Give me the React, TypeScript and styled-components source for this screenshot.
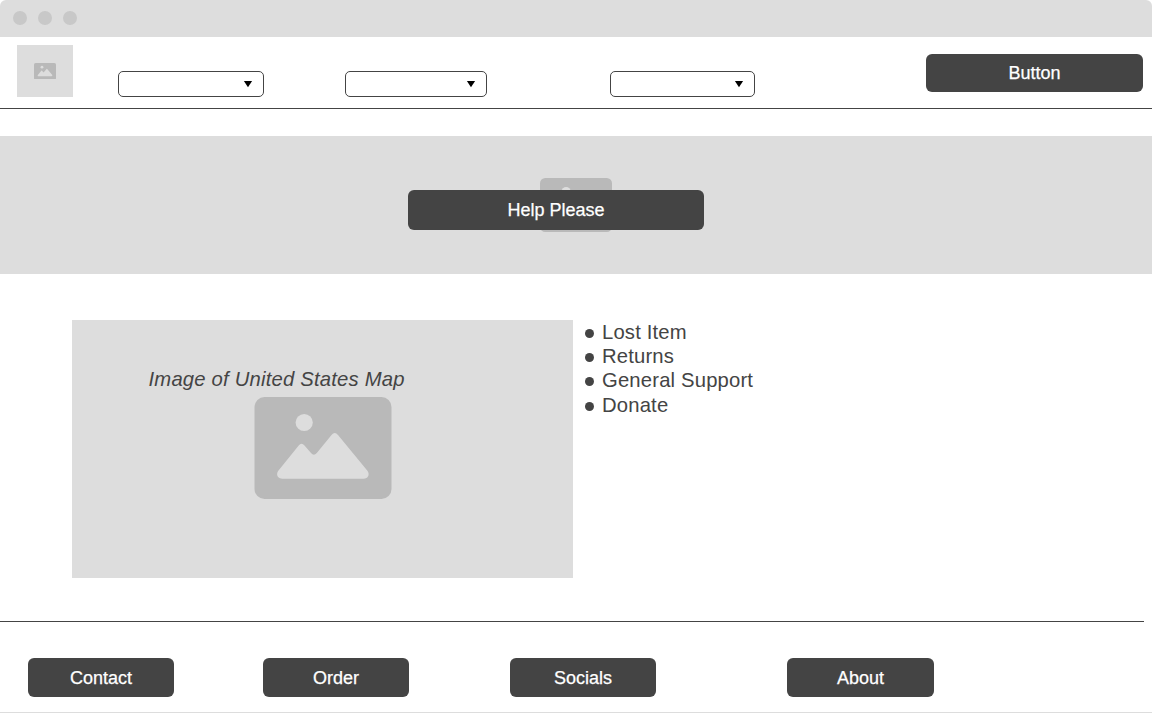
import React from "react";
import styled, { createGlobalStyle } from "styled-components";

const GlobalStyle = createGlobalStyle`
  * { box-sizing: border-box; }
  body { margin: 0; background: #fff; font-family: "Liberation Sans", Arial, sans-serif; color: #444; }
`;

const Page = styled.div`
  width: 1152px;
  height: 713px;
  display: flex;
  flex-direction: column;
  overflow: hidden;
  border-bottom: 1px solid #ddd;
`;

const TitleBar = styled.div`
  height: 37px;
  flex: none;
  display: flex;
  gap: 10.75px;
  padding: 11px 13px;
  background: #ddd;
  border-radius: 6px 6px 0 0;
`;

const WindowDot = styled.span`
  width: 14px;
  height: 14px;
  border-radius: 50%;
  background: #c8c8c8;
`;

const Header = styled.header`
  height: 72px;
  flex: none;
  display: flex;
  align-items: flex-start;
  padding: 8px 9px 0 17px;
  border-bottom: 1px solid #444;
`;

const Placeholder = styled.div<{ $w: number; $h: number; $lift?: number }>`
  width: ${(p) => p.$w}px;
  height: ${(p) => p.$h}px;
  flex: none;
  display: flex;
  align-items: center;
  justify-content: center;
  padding-bottom: ${(p) => p.$lift ?? 0}px;
  position: relative;
  background: #ddd;
`;

const Select = styled.button<{ $w: number; $gap: number }>`
  width: ${(p) => p.$w}px;
  height: 26px;
  margin: 26px 0 0 ${(p) => p.$gap}px;
  padding: 0 10px 0 0;
  display: flex;
  align-items: center;
  justify-content: flex-end;
  background: #fff;
  border: 1px solid #444;
  border-radius: 5px;
`;

const Button = styled.button<{ $w: number; $h: number }>`
  width: ${(p) => p.$w}px;
  height: ${(p) => p.$h}px;
  flex: none;
  padding: 0;
  border: 0;
  border-radius: 6px;
  background: #444;
  color: #fff;
  font: 18px/20px "Liberation Sans", Arial, sans-serif;
  -webkit-text-stroke: 0.25px #fff;
`;

const HeaderAction = styled.div`
  margin: 9px 0 0 auto;
`;

const Hero = styled.section`
  height: 138px;
  flex: none;
  margin-top: 27px;
  display: flex;
`;

const HeroAction = styled.div`
  position: absolute;
  left: 408px;
  top: 54px;
  display: flex;
`;

const Content = styled.main`
  display: flex;
  flex: none;
  height: 347px;
  width: 1144px;
  padding: 46px 0 0 72px;
`;

const Caption = styled.span`
  position: absolute;
  left: 76.5px;
  top: 47px;
  font-size: 20.25px;
  line-height: 24.3px;
  letter-spacing: 0.2px;
  font-style: italic;
  white-space: nowrap;
`;

const Topics = styled.ul`
  margin: 0 0 0 12px;
  padding: 0;
  list-style: none;
  font-size: 20.25px;
  line-height: 24.2px;
  letter-spacing: 0.17px;
`;

const Topic = styled.li`
  display: flex;
  align-items: center;
  gap: 8px;

  &:last-child {
    margin-top: 0.6px;
  }

  &::before {
    content: "";
    width: 9px;
    height: 9px;
    margin-top: 2px;
    border-radius: 50%;
    background: #444;
  }
`;

const Divider = styled.div`
  height: 1px;
  width: 1144px;
  flex: none;
  background: #444;
`;

const Footer = styled.footer`
  display: flex;
  padding: 36px 0 0 28px;
`;

const FooterItem = styled.div<{ $after: number }>`
  margin-right: ${(p) => p.$after}px;
`;

function Picture({ width, height, inset = 0 }: { width: number; height: number; inset?: number }) {
  return (
    <svg width={width} height={height} viewBox={`${-inset} 0 ${137 + inset * 2} 102`} preserveAspectRatio="none" aria-hidden="true">
      <rect width="137" height="102" rx="10" fill="#b9b9b9" />
      <circle cx="49.7" cy="25.5" r="8.6" fill="#ddd" />
      <path
        d="M24 73.5 L44 48.7 Q47 45 50 48.5 L56.5 56 Q59.3 59.5 62.3 56 L77 38 Q80.2 34 83.5 38 L112.5 73.3 C116 77.5 113.5 81.8 109 81.8 L28 81.8 C23.5 81.8 20.8 77.5 24 73.5 Z"
        fill="#ddd"
      />
    </svg>
  );
}

function Arrow() {
  return (
    <svg width="10" height="8" viewBox="0 0 10 8" aria-hidden="true">
      <path d="M.9 1H9.1L5 7.2Z" fill="#000" />
    </svg>
  );
}

const menus = [
  { width: 146, gap: 45 },
  { width: 142, gap: 81 },
  { width: 145, gap: 123 },
];

const links = [
  { label: "Contact", width: 146, after: 89 },
  { label: "Order", width: 146, after: 101 },
  { label: "Socials", width: 146, after: 131 },
  { label: "About", width: 147, after: 0 },
];

export default function App() {
  return (
    <>
      <GlobalStyle />
      <Page>
        <TitleBar>
          <WindowDot />
          <WindowDot />
          <WindowDot />
        </TitleBar>
        <Header>
          <Placeholder $w={56} $h={52}>
            <Picture width={22} height={16.5} />
          </Placeholder>
          {menus.map((m) => (
            <Select key={m.gap} $w={m.width} $gap={m.gap}>
              <Arrow />
            </Select>
          ))}
          <HeaderAction>
            <Button $w={217} $h={38}>Button</Button>
          </HeaderAction>
        </Header>
        <Hero>
          <Placeholder $w={1152} $h={138}>
            <Picture width={72} height={54} />
            <HeroAction>
              <Button $w={296} $h={40}>Help Please</Button>
            </HeroAction>
          </Placeholder>
        </Hero>
        <Content>
          <Placeholder $w={501} $h={258} $lift={2}>
            <Picture width={138} height={102} inset={0.5} />
            <Caption>Image of United States Map</Caption>
          </Placeholder>
          <Topics>
            {["Lost Item", "Returns", "General Support", "Donate"].map((t) => (
              <Topic key={t}>{t}</Topic>
            ))}
          </Topics>
        </Content>
        <Divider />
        <Footer>
          {links.map((l) => (
            <FooterItem key={l.label} $after={l.after}>
              <Button $w={l.width} $h={39}>{l.label}</Button>
            </FooterItem>
          ))}
        </Footer>
      </Page>
    </>
  );
}
